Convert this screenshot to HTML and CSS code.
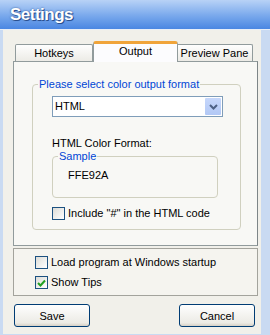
FILE: index.html
```html
<!DOCTYPE html>
<html lang="en">
  <head>
    <meta charset="UTF-8" />
    <title>Settings</title>
    <link rel="stylesheet" href="styles.css">
  </head>
  <body>
    <div class="window">
      <div class="titlebar">Settings</div>

      <div class="client">
        <div class="tabs">
          <div class="tab">Hotkeys</div>
          <div class="tab active">Output</div>
          <div class="tab">Preview Pane</div>
        </div>

        <div class="panel">
          <fieldset class="group">
            <legend>Please select color output format</legend>

            <div class="select">
              <span class="select-text">HTML</span>
              <span class="select-btn">
                <svg width="9" height="6" viewBox="0 0 9 6">
                  <path d="M1 1 L4.5 4.5 L8 1" fill="none" stroke="#4d6185" stroke-width="2" />
                </svg>
              </span>
            </div>

            <div class="format-label">HTML Color Format:</div>

            <fieldset class="sample">
              <legend>Sample</legend>
              <div class="sample-value">FFE92A</div>
            </fieldset>

            <label class="check">
              <span class="box"></span>
              <span>Include "#" in the HTML code</span>
            </label>
          </fieldset>
        </div>

        <div class="options">
          <label class="check">
            <span class="box"></span>
            <span>Load program at Windows startup</span>
          </label>
          <label class="check">
            <span class="box checked">
              <svg width="9" height="8" viewBox="0 0 9 8">
                <path d="M1 4 L3.5 6.5 L8 1.5" fill="none" stroke="#21a121" stroke-width="2" />
              </svg>
            </span>
            <span>Show Tips</span>
          </label>
        </div>

        <div class="buttons">
          <button class="button">Save</button>
          <button class="button">Cancel</button>
        </div>
      </div>
    </div>
  </body>
</html>
```

FILE: styles.css
```css
body {
  margin: 0;
  font-family: "Liberation Sans", Arial, sans-serif;
  font-size: 11px;
  line-height: 13px;
  background-color: #c9daf2;
  color: #000;
}

.window {
  width: 270px;
  height: 335px;
  overflow: hidden;
}

.titlebar {
  height: 30px;
  box-sizing: border-box;
  padding: 6px 0 0 10px;
  font-family: "Liberation Sans", Arial, sans-serif;
  font-weight: bold;
  font-size: 17px;
  line-height: 18px;
  letter-spacing: -0.5px;
  color: #fff;
  text-shadow: 1px 1px 0 #2a4f8f, 0 0 2px #2a4f8f;
  background: linear-gradient(#b8d2f6, #78a8ec 55%, #4a86e2);
  border-bottom: 1px solid #e8eef8;
}

.client {
  margin: 0 9px 0 3px;
  height: 304px;
  padding: 10px 3px 0 10px;
  box-sizing: border-box;
  background-color: #f1f0ea;
}

.tabs {
  display: flex;
  align-items: flex-end;
  height: 21px;
  padding-left: 2px;
}

.tab {
  height: 17px;
  box-sizing: border-box;
  border: 1px solid #919b9c;
  border-bottom: none;
  border-radius: 2px 2px 0 0;
  background: linear-gradient(#fefefe, #ecebe6);
  text-align: center;
  line-height: 16px;
}

.tab:nth-child(1) {
  width: 78px;
}

.tab:nth-child(3) {
  width: 77px;
  margin-left: -2px;
}

.tab.active {
  width: 85px;
  height: 21px;
  position: relative;
  z-index: 1;
  background: #fcfcfe;
  border-top: 3px solid #f0a43a;
  border-radius: 3px 3px 0 0;
  line-height: 15px;
  margin-bottom: -1px;
}

.panel {
  height: 185px;
  box-sizing: border-box;
  border: 1px solid #919b9c;
  border-right-color: #7d8587;
  background-color: #f8f8f5;
  padding: 16px 16px 0 18px;
}

fieldset {
  margin: 0;
  border: 1px solid #d0d0bf;
  border-radius: 4px;
}

legend {
  color: #0046d5;
  padding: 0 1px;
}

.group {
  height: 152px;
  box-sizing: border-box;
  padding: 5px 0 0 19px;
}

.group > legend {
  margin-left: -14px;
}

.select {
  display: flex;
  width: 171px;
  height: 21px;
  box-sizing: border-box;
  border: 1px solid #7f9db9;
  background-color: #fff;
  padding: 1px;
}

.select-text {
  flex: 1;
  padding-left: 1px;
  line-height: 17px;
}

.select-btn {
  width: 16px;
  display: flex;
  align-items: center;
  justify-content: center;
  background: linear-gradient(#c6d7fb, #b2c8f5);
  border-radius: 1px;
}

.format-label {
  margin-top: 20px;
}

.sample {
  width: 166px;
  height: 48px;
  box-sizing: border-box;
  padding: 6px 0 0 15px;
}

.sample legend {
  margin-left: -10px;
}

.check {
  display: flex;
  align-items: center;
  gap: 3px;
  height: 13px;
}

.group .check {
  margin-top: 9px;
}

.box {
  width: 13px;
  height: 13px;
  box-sizing: border-box;
  border: 1px solid #1c5180;
  background: linear-gradient(135deg, #dcdcd7, #fff);
  display: flex;
  align-items: center;
  justify-content: center;
}

.options {
  margin-top: 2px;
  height: 48px;
  box-sizing: border-box;
  border: 1px solid #a3a39c;
  background-color: #f5f4ef;
  padding: 7px 0 0 21px;
  display: flex;
  flex-direction: column;
  gap: 7px;
}

.buttons {
  display: flex;
  justify-content: space-between;
  margin-top: 8px;
  padding: 0 3px 0 1px;
}

.button {
  width: 76px;
  height: 23px;
  border: 1px solid #003c74;
  border-radius: 3px;
  background: linear-gradient(#fefefe, #ecebe5 85%, #d6d0c5);
  font-family: "Liberation Sans", Arial, sans-serif;
  font-size: 11px;
  color: #000;
  padding: 0;
}
```
